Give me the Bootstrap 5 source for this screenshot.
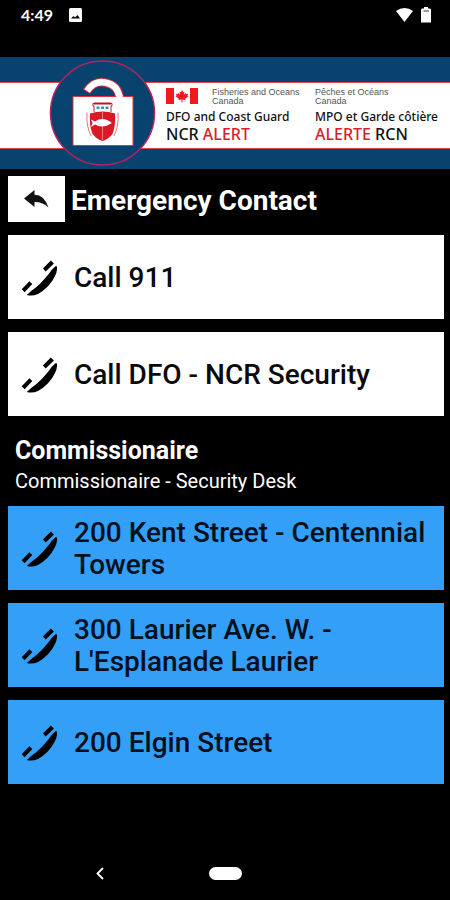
<!DOCTYPE html>
<html lang="en">
<head>
<meta charset="utf-8">
<meta name="viewport" content="width=device-width, initial-scale=1">
<title>Emergency Contact</title>
<link href="https://cdn.jsdelivr.net/npm/bootstrap@5.3.0/dist/css/bootstrap.min.css" rel="stylesheet">
<style>
  body { background: #000; color: #fff; font-family: Roboto, "Liberation Sans", sans-serif; }
  .status-bar { height: 57px; padding: 5px 19px 0 21px; font: 700 16px/20px Lato, sans-serif; }
  .status-icons { height: 20px; }
  .banner { background: #08426f; padding: 25px 0 20px; }
  .stripe { background: #fff; border: solid #e0434c; border-width: 1px 0; padding: 4px 6px 4px 166px; min-height: 67px; color: #111; font-family: "Noto Sans", "Open Sans", sans-serif; }
  .wording { width: 149px; }
  .flag-row { gap: 14px; }
  .emblem { top: 2px; left: 49px; }
  .dept { font: 9px/9px "Liberation Sans", sans-serif; color: #555; height: 22px; padding-top: 1px; }
  .org { font-size: 12px; line-height: 16px; font-weight: 500; }
  .org-alert { font-size: 16px; line-height: 18px; font-weight: 500; }
  .alert-word { color: #d81e2c; }
  .content { padding: 7px 6px 0 8px; }
  .back { width: 57px; height: 46px; }
  .page-title { font-size: 28px; line-height: 48px; font-weight: 700; margin-left: 6px; }
  .title-bar { height: 46px; margin-bottom: 13px; }
  .call { min-height: 84px; padding: 11px 12px 9px 13px; gap: 17px; background: #fff; color: #0a0a0a; font-size: 28px; line-height: 32px; font-weight: 500; }
  .call:hover { color: #000; }
  .call.site { background: #349ff7; color: #04101c; }
  .calls { gap: 13px; }
  .group-head { padding: 20px 7px 10px; }
  .group-head h2 { font-size: 25px; line-height: 30px; font-weight: 700; }
  .group-head p { font-size: 20px; line-height: 30px; }
  .system-nav { height: 54px; }
  .system-nav .side { flex: 1 1 0; }
  .system-nav .home-cell { width: 50px; }
  .pill { width: 33px; height: 13px; background: #fff; }
</style>
<script src="https://cdn.jsdelivr.net/npm/bootstrap@5.3.0/dist/js/bootstrap.bundle.min.js"></script>
</head>
<body class="d-flex flex-column min-vh-100">
<svg class="d-none" aria-hidden="true">
  <symbol id="phone" viewBox="0 0 36 36">
    <path d="M21.900 8.500 29.800.4 32.900 3.500 24.700 11.600ZM.7 29.300 8.400 21.300 11.300 24.100 3.600 32.200ZM34.500 6.300Q35.500 5.500 35.900 7Q36.500 11 34 16Q31.500 21.500 27 26.200Q22 31.300 17 33.900Q11.500 36.400 5.800 35L10.500 30.700Q15.500 27.500 20 22.800Q24 18.500 27.300 14.500Q30.500 9.500 34.500 6.300Z"/>
  </symbol>
</svg>

<div class="status-bar d-flex align-items-start">
  <span>4:49</span>
  <div class="status-icons d-flex align-items-center ms-3">
    <svg width="13" height="14" viewBox="0 0 13 14" aria-hidden="true"><rect width="13" height="14" rx="1.500" fill="#fff"/><path d="M2 10.500 4.500 8l1.500 1.500L8.500 7l2.500 3.500Z" fill="#000"/></svg>
  </div>
  <div class="status-icons d-flex align-items-center gap-2 ms-auto">
    <svg width="17" height="16" viewBox="0 0 17 16" aria-hidden="true"><path d="M0 4Q8.500-2 17 4L8.500 15Z" fill="#fff"/></svg>
    <svg width="10" height="16" viewBox="0 0 10 16" aria-hidden="true"><path d="M1 1.500H3V0H7V1.500H9Q10 1.500 10 3V15.500H0V3Q0 1.500 1 1.500Z" fill="#fff"/><path d="M2.500 4H8" stroke="#333"/></svg>
  </div>
</div>

<header class="banner position-relative">
  <div class="stripe d-flex text-nowrap">
    <div class="wording flex-shrink-0">
      <div class="flag-row d-flex">
        <svg class="flex-shrink-0" width="32" height="19" viewBox="0 0 32 19" role="img" aria-label="Flag of Canada">
          <path d="M0 1H8V17H0ZM24 1H32V17H24Z" fill="#f01822"/>
          <path d="m16 3 1.200 2.300 1.300-.6-.5 3 1.700-1.600.4.900 2-.3-.7 1.900 1 .6-3.200 2.500.3 1.200-3-.5V15.500h-1v-3.100l-3 .5.300-1.200L9.600 9.200l1-.6-.7-1.900 2 .3.400-.9 1.700 1.600-.5-3 1.300.6Z" fill="#f01822"/>
        </svg>
        <div class="dept">Fisheries and Oceans<br>Canada</div>
      </div>
      <div class="org">DFO and Coast Guard</div>
      <div class="org-alert">NCR <span class="alert-word">ALERT</span></div>
    </div>
    <div>
      <div class="dept">Pêches et Océans<br>Canada</div>
      <div class="org">MPO et Garde côtière</div>
      <div class="org-alert"><span class="alert-word">ALERTE</span> RCN</div>
    </div>
  </div>
  <svg class="emblem position-absolute" width="108" height="108" viewBox="0 0 108 108" role="img" aria-label="DFO NCR Alert emblem">
    <circle cx="53.500" cy="54" r="52" fill="#08426f" stroke="#b5235f" stroke-width="1.500"/>
    <path d="M37.500 32.500C42 25.500 49 22 56 23.500C65 25 70.500 31 70.500 40" fill="none" stroke="#e8303a" stroke-width="8.500"/>
    <path d="M38 32C42.500 25.500 49 22 56 23.500C65 25 70.500 31 70.500 42" fill="none" stroke="#fff" stroke-width="6.500"/>
    <path d="M24 37.500H84V86.500H24Z" fill="#fff" stroke="#e8303a"/>
    <path d="M67.300 35.500h6.400V40h-6.400Z" fill="#fff"/>
    <path d="M45 53V47h-1v-2.500H63V47h-1v6" fill="#fff" stroke="#c31c28"/>
    <path d="M45 44.500H62" stroke="#b51923" stroke-width="2"/>
    <path d="M47.500 47.500h3v2.500h-3Zm4.500 0h3v2.500h-3Zm4.500 0h3v2.500h-3Z" fill="#2a9bbd"/>
    <path d="M41 54.500Q47 52.500 53.500 52.500Q60 52.500 66 54.500Q67 66 63.500 75Q59 80.500 53.500 82Q48 80.500 43.500 75Q40 66 41 54.500Z" fill="#d91925"/>
    <path d="M38 53.500Q37 67 42 77M69 53.500Q70 67 65 77" fill="none" stroke="#e77780"/>
    <path d="M53.500 52V81" stroke="#f07a80"/>
    <path d="M42 60.500 46 62.500Q54 57 63 64Q54 70 46 65.500L42 68 43.500 64Z" fill="#fff"/>
  </svg>
</header>

<main class="content">
  <div class="title-bar d-flex align-items-center">
    <button type="button" class="back btn btn-light bg-white rounded-0 border-0 p-0 d-flex align-items-center justify-content-center flex-shrink-0" aria-label="Back">
      <svg width="25" height="18" viewBox="0 0 25 18" aria-hidden="true"><path d="M0 8.500 10.500 0V4.700Q20 4.500 24.500 17.500Q18.500 11.700 10.500 12V17Z" fill="#111"/></svg>
    </button>
    <h1 class="page-title mb-0 pt-1">Emergency Contact</h1>
  </div>

  <div class="calls d-flex flex-column">
    <a href="tel:911" class="call d-flex align-items-center text-decoration-none"><svg class="flex-shrink-0" width="36" height="36" fill="#000" aria-hidden="true"><use href="#phone"/></svg><span>Call 911</span></a>
    <a href="#dfo" class="call d-flex align-items-center text-decoration-none"><svg class="flex-shrink-0" width="36" height="36" fill="#000" aria-hidden="true"><use href="#phone"/></svg><span>Call DFO - NCR Security</span></a>
  </div>

  <div class="group-head">
    <h2 class="mb-0">Commissionaire</h2>
    <p class="mb-0">Commissionaire - Security Desk</p>
  </div>

  <div class="calls d-flex flex-column">
    <a href="#kent" class="call site d-flex align-items-center text-decoration-none"><svg class="flex-shrink-0" width="36" height="36" fill="#000" aria-hidden="true"><use href="#phone"/></svg><span>200 Kent Street - Centennial Towers</span></a>
    <a href="#laurier" class="call site d-flex align-items-center text-decoration-none"><svg class="flex-shrink-0" width="36" height="36" fill="#000" aria-hidden="true"><use href="#phone"/></svg><span>300 Laurier Ave. W. - L'Esplanade Laurier</span></a>
    <a href="#elgin" class="call site d-flex align-items-center text-decoration-none"><svg class="flex-shrink-0" width="36" height="36" fill="#000" aria-hidden="true"><use href="#phone"/></svg><span>200 Elgin Street</span></a>
  </div>
</main>

<nav class="system-nav mt-auto d-flex align-items-center" aria-label="System">
  <div class="side d-flex justify-content-center">
    <button type="button" class="btn p-0 border-0 d-flex" aria-label="System back"><svg width="8" height="13" viewBox="0 0 8 13" aria-hidden="true"><path d="M7 1 1.500 6.500 7 12" fill="none" stroke="#fff" stroke-width="1.800"/></svg></button>
  </div>
  <div class="home-cell d-flex justify-content-center">
    <button type="button" class="pill btn rounded-pill p-0 border-0" aria-label="Home"></button>
  </div>
  <div class="side"></div>
</nav>
</body>
</html>
